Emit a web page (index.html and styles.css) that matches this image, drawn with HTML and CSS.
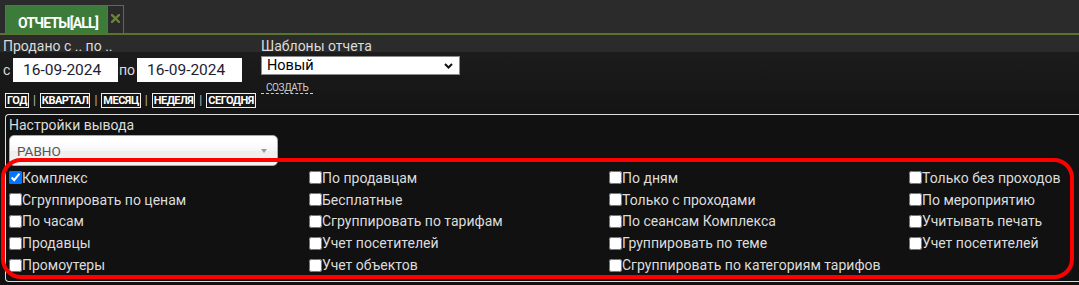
FILE: index.html
```html
<!DOCTYPE html>
<html lang="ru">
<head>
<meta charset="utf-8">
<title>Отчеты</title>
<link rel="stylesheet" href="styles.css">
</head>
<body>
<div class="tabbar">
  <div class="tab">ОТЧЕТЫ[ALL]</div>
  <div class="tab-close">
    <svg width="9" height="9" viewBox="0 0 9 9"><path d="M1 1 L8 8 M8 1 L1 8" stroke="#6e8040" stroke-width="2.4" stroke-linecap="square"/></svg>
  </div>
</div>

<div class="filters">
  <div class="period">
    <div class="caption">Продано с .. по ..</div>
    <div class="dates">
      <span class="lbl-from">с</span>
      <input class="date" type="text" value="16-09-2024">
      <span class="lbl-to">по</span>
      <input class="date" type="text" value="16-09-2024">
    </div>
    <div class="quick">
      <span class="qbtn">год</span><span class="sep">|</span>
      <span class="qbtn">квартал</span><span class="sep">|</span>
      <span class="qbtn">месяц</span><span class="sep">|</span>
      <span class="qbtn">неделя</span><span class="sep">|</span>
      <span class="qbtn">сегодня</span>
    </div>
  </div>
  <div class="templates">
    <div class="caption">Шаблоны отчета</div>
    <div class="tpl-select">
      <span>Новый</span>
      <svg width="9" height="6" viewBox="0 0 9 6"><path d="M1 1 L4.5 4.5 L8 1" fill="none" stroke="#111" stroke-width="2"/></svg>
    </div>
    <a class="create">создать</a>
  </div>
</div>

<div class="output">
  <div class="output-title">Настройки вывода</div>
  <div class="chosen">
    <span>РАВНО</span>
    <span class="chosen-arrow"></span>
  </div>
  <div class="options">
    <label class="opt"><input type="checkbox" checked>Комплекс</label>
    <label class="opt"><input type="checkbox">По продавцам</label>
    <label class="opt"><input type="checkbox">По дням</label>
    <label class="opt"><input type="checkbox">Только без проходов</label>

    <label class="opt"><input type="checkbox">Сгруппировать по ценам</label>
    <label class="opt"><input type="checkbox">Бесплатные</label>
    <label class="opt"><input type="checkbox">Только с проходами</label>
    <label class="opt"><input type="checkbox">По мероприятию</label>

    <label class="opt"><input type="checkbox">По часам</label>
    <label class="opt"><input type="checkbox">Сгруппировать по тарифам</label>
    <label class="opt"><input type="checkbox">По сеансам Комплекса</label>
    <label class="opt"><input type="checkbox">Учитывать печать</label>

    <label class="opt"><input type="checkbox">Продавцы</label>
    <label class="opt"><input type="checkbox">Учет посетителей</label>
    <label class="opt"><input type="checkbox">Группировать по теме</label>
    <label class="opt"><input type="checkbox">Учет посетителей</label>

    <label class="opt"><input type="checkbox">Промоутеры</label>
    <label class="opt"><input type="checkbox">Учет объектов</label>
    <label class="opt"><input type="checkbox">Сгруппировать по категориям тарифов</label>
  </div>
  <div class="highlight"></div>
</div>
</body>
</html>
```

FILE: styles.css
```css
* { box-sizing: border-box; }

html, body {
  margin: 0;
  padding: 0;
}

body {
  width: 1079px;
  height: 285px;
  overflow: hidden;
  font-family: Roboto, "Noto Sans", sans-serif;
  font-size: 14px;
  color: #dcdcdc;
  background: linear-gradient(#2b2b2b 0, #2b2b2b 52px, #1c1c1c 52px, #141414 114px, #111111 100%);
}

/* ---------- tab bar ---------- */
.tabbar {
  height: 35px;
  background: #2b2b2b;
  border-bottom: 2px solid #5b7331;
  display: flex;
  align-items: flex-end;
  padding-left: 5px;
}

.tab {
  height: 28px;
  padding: 6px 0 0 12px;
  width: 103px;
  line-height: 22px;
  background: #3d7b3a;
  border: 1px solid #55773a;
  border-bottom: 0;
  color: #fff;
  font-weight: 700;
  font-size: 14px;
  letter-spacing: -0.8px;
  white-space: nowrap;
}

.tab-close {
  width: 16px;
  height: 28px;
  background: #2a2a2a;
  border: 1px solid #5b7331;
  border-left: 0;
  border-bottom: 0;
  display: flex;
  justify-content: center;
  padding-top: 8px;
}

/* ---------- filters ---------- */
.filters {
  display: flex;
  padding: 4px 0 0 3px;
}

.caption {
  line-height: 15px;
  height: 15px;
}

.period {
  width: 258px;
}

.dates {
  margin-top: 4px;
  display: flex;
  align-items: center;
  height: 24px;
}

.lbl-from {
  width: 10px;
}

.date {
  width: 105px;
  height: 24px;
  border: 0;
  outline: none;
  padding: 0 0 0 10px;
  margin: 0;
  background: #fff;
  color: #1d1d33;
  font-family: Roboto, sans-serif;
  font-size: 15.5px;
}

.lbl-to {
  width: 19px;
  padding-left: 1px;
}

.quick {
  margin-top: 11px;
  margin-left: 2px;
  display: flex;
  gap: 4px;
  align-items: center;
}

.qbtn {
  border: 1px solid #eee;
  padding: 0 1px;
  font-weight: 700;
  font-size: 11px;
  line-height: 13px;
  color: #fff;
  text-transform: uppercase;
  letter-spacing: -0.5px;
}

.sep {
  color: #b9b9b9;
  font-size: 12px;
  line-height: 13px;
}

.templates {
  display: flex;
  flex-direction: column;
  align-items: flex-start;
}

.tpl-select {
  margin-top: 2px;
  width: 199px;
  height: 19px;
  background: #fff;
  border: 1px solid #8a8a8a;
  color: #000;
  font-size: 14.5px;
  display: flex;
  align-items: center;
  justify-content: space-between;
  padding: 0 6px 0 5px;
}

.create {
  margin-top: 7px;
  padding: 0 5px;
  font-size: 10px;
  line-height: 11px;
  text-transform: uppercase;
  color: #cfcfcf;
  border-bottom: 1px dashed #cfcfcf;
  letter-spacing: -0.4px;
}

/* ---------- output settings ---------- */
.output {
  position: relative;
  margin: 6px 0 0 5px;
  width: 1100px;
  height: 168px;
  border: 1px solid #dedede;
  border-right: 0;
  border-radius: 4px 0 0 4px;
  padding: 3px 0 0 3px;
  background: #111;
}

.output-title {
  line-height: 15px;
  height: 15px;
}

.chosen {
  margin-top: 2px;
  width: 269px;
  height: 31px;
  border: 1px solid #aaa;
  border-radius: 5px;
  background: linear-gradient(#ffffff 20%, #f6f6f6 50%, #eeeeee 52%, #f4f4f4 100%);
  color: #555;
  font-size: 13.5px;
  display: flex;
  align-items: center;
  justify-content: space-between;
  padding: 0 10px 0 7px;
}

.chosen-arrow {
  width: 0;
  height: 0;
  border-left: 3px solid transparent;
  border-right: 3px solid transparent;
  border-top: 4px solid #999;
}

.options {
  margin-top: 1px;
  display: grid;
  grid-template-columns: repeat(4, 300px);
  grid-auto-rows: 21.8px;
}

.opt {
  display: flex;
  align-items: center;
  white-space: nowrap;
}

.opt input {
  margin: 0;
  width: 13px;
  height: 13px;
}

.highlight {
  position: absolute;
  left: -5px;
  top: 43px;
  width: 1073px;
  height: 121px;
  border: 4px solid #ff0000;
  border-radius: 20px;
  pointer-events: none;
}
```
